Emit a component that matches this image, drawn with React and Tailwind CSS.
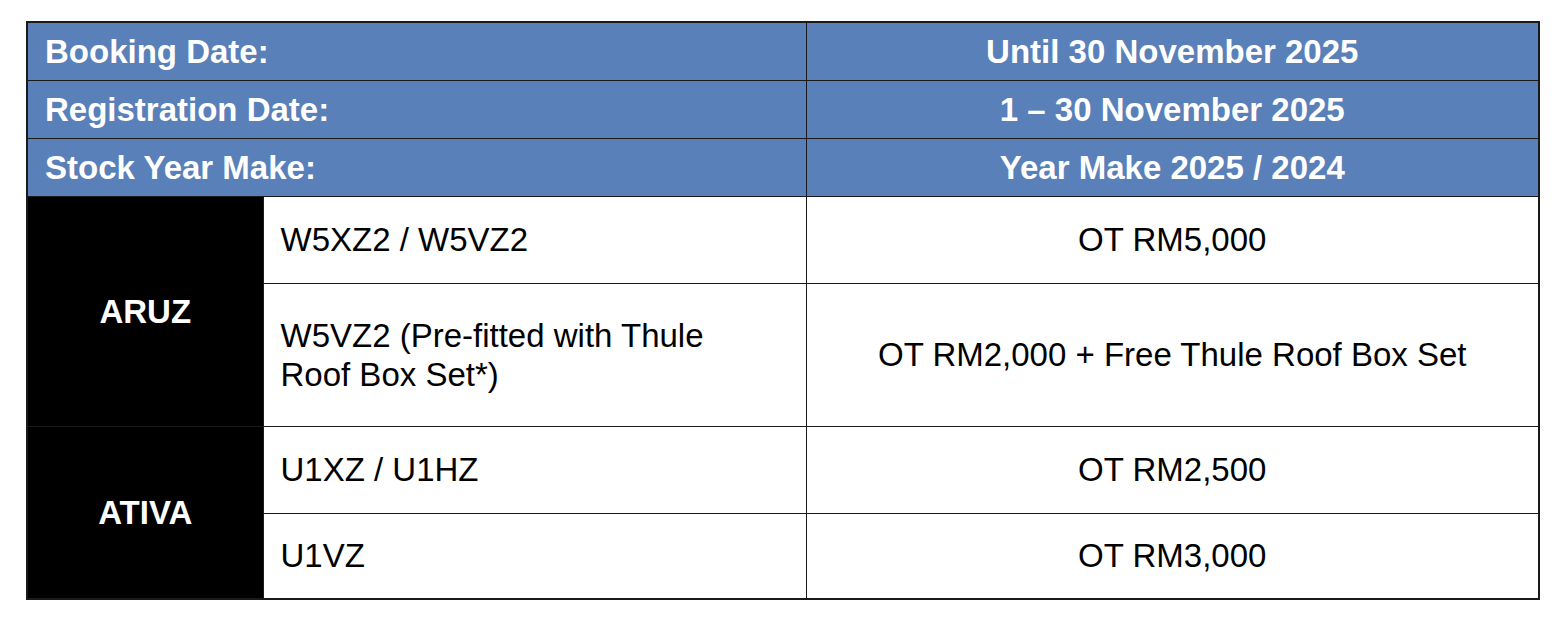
export default function App() {
  const font = { fontFamily: '"Liberation Sans", Arial, sans-serif' };
  const hdr = "bg-[#5980b8] text-white font-bold border border-[#1a1a1a] h-[58px] align-middle";
  const cell = "border border-[#1a1a1a] align-middle text-black";
  return (
    <div className="w-[1566px] h-[620px] bg-white pt-[21px] pl-[26px]" style={font}>
      <table className="table-fixed border-collapse w-[1512px] text-[33px] leading-[39px] border-2 border-[#1a1a1a]">
        <colgroup>
          <col className="w-[236px]" />
          <col className="w-[543px]" />
          <col className="w-[733px]" />
        </colgroup>
        <tbody>
          <tr>
            <td colSpan={2} className={`${hdr} pl-[17px] text-left`}>Booking Date:</td>
            <td className={`${hdr} text-center`}>Until 30 November 2025</td>
          </tr>
          <tr>
            <td colSpan={2} className={`${hdr} pl-[17px] text-left`}>Registration Date:</td>
            <td className={`${hdr} text-center`}>1 – 30 November 2025</td>
          </tr>
          <tr>
            <td colSpan={2} className={`${hdr} pl-[17px] text-left`}>Stock Year Make:</td>
            <td className={`${hdr} text-center`}>Year Make 2025 / 2024</td>
          </tr>
          <tr className="h-[87px]">
            <td rowSpan={2} className="bg-black text-white font-bold text-center align-middle border border-[#1a1a1a]">ARUZ</td>
            <td className={`${cell} pl-[17px]`}>W5XZ2 / W5VZ2</td>
            <td className={`${cell} text-center`}>OT RM5,000</td>
          </tr>
          <tr className="h-[143px]">
            <td className={`${cell} pl-[17px]`}>W5VZ2 (Pre-fitted with Thule<br />Roof Box Set*)</td>
            <td className={`${cell} text-center`}>OT RM2,000 + Free Thule Roof Box Set</td>
          </tr>
          <tr className="h-[87px]">
            <td rowSpan={2} className="bg-black text-white font-bold text-center align-middle border border-[#1a1a1a]">ATIVA</td>
            <td className={`${cell} pl-[17px]`}>U1XZ / U1HZ</td>
            <td className={`${cell} text-center`}>OT RM2,500</td>
          </tr>
          <tr className="h-[86px]">
            <td className={`${cell} pl-[17px]`}>U1VZ</td>
            <td className={`${cell} text-center`}>OT RM3,000</td>
          </tr>
        </tbody>
      </table>
    </div>
  );
}
